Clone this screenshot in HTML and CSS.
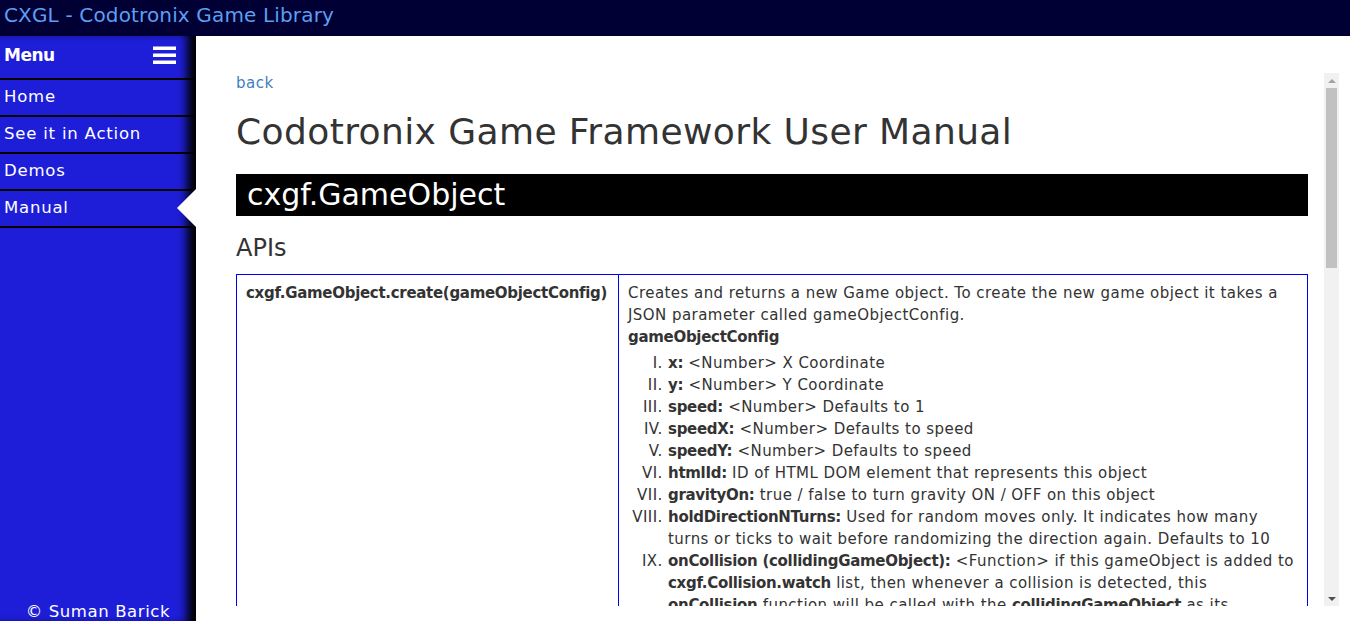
FILE: index.html
```html
<!DOCTYPE html>
<html>
<head>
<meta charset="utf-8">
<title>CXGL - Manual</title>
<link rel="stylesheet" href="styles.css">
</head>
<body>
<header class="topbar">CXGL - Codotronix Game Library</header>
<div class="layout">
  <nav class="sidebar">
    <div class="menu-head">
      <span class="menu-title">Menu</span>
      <svg class="burger" width="23" height="18" viewBox="0 0 23 18"><rect x="0" y="0.5" width="23" height="3.5" fill="#fff"/><rect x="0" y="7.5" width="23" height="3.5" fill="#fff"/><rect x="0" y="14.5" width="23" height="3.5" fill="#fff"/></svg>
    </div>
    <a class="nav-item">Home</a>
    <a class="nav-item">See it in Action</a>
    <a class="nav-item">Demos</a>
    <a class="nav-item active">Manual</a>
    <div class="spacer"></div>
    <div class="credit">© Suman Barick</div>
  </nav>
  <main class="main">
    <div class="panel">
      <div class="scroller">
        <a class="back">back</a>
        <h1 class="title">Codotronix Game Framework User Manual</h1>
        <h2 class="section">cxgf.GameObject</h2>
        <h3 class="sub">APIs</h3>
        <table class="api">
          <colgroup><col class="c1"><col></colgroup>
          <tr>
            <td class="fn">cxgf.GameObject.create(gameObjectConfig)</td>
            <td class="desc">
              Creates and returns a new Game object. To create the new game object it takes a JSON parameter called gameObjectConfig.
              <div class="cfg">gameObjectConfig</div>
              <ol class="roman">
                <li><b>x:</b> &lt;Number&gt; X Coordinate</li>
                <li><b>y:</b> &lt;Number&gt; Y Coordinate</li>
                <li><b>speed:</b> &lt;Number&gt; Defaults to 1</li>
                <li><b>speedX:</b> &lt;Number&gt; Defaults to speed</li>
                <li><b>speedY:</b> &lt;Number&gt; Defaults to speed</li>
                <li><b>htmlId:</b> ID of HTML DOM element that represents this object</li>
                <li><b>gravityOn:</b> true / false to turn gravity ON / OFF on this object</li>
                <li><b>holdDirectionNTurns:</b> Used for random moves only. It indicates how many turns or ticks to wait before randomizing the direction again. Defaults to 10</li>
                <li><b>onCollision (collidingGameObject):</b> &lt;Function&gt; if this gameObject is added to <b>cxgf.Collision.watch</b> list, then whenever a collision is detected, this <b>onCollision</b> function will be called with the <b>collidingGameObject</b> as its parameter.</li>
              </ol>
            </td>
          </tr>
          <tr>
            <td class="fn">gameObject.move()</td>
            <td class="desc">Moves the game object one step according to its speed and direction.</td>
          </tr>
        </table>
      </div>
      <div class="vscroll">
        <div class="sb-btn"><span class="arrow-up"></span></div>
        <div class="sb-thumb"></div>
        <div class="sb-track"></div>
        <div class="sb-btn"><span class="arrow-down"></span></div>
      </div>
    </div>
  </main>
</div>
</body>
</html>
```
FILE: styles.css
```css
html, body {
  margin: 0;
  padding: 0;
  height: 100%;
  overflow: hidden;
}
body {
  font-family: "DejaVu Sans", "Liberation Sans", sans-serif;
  display: flex;
  flex-direction: column;
  background: #fff;
}
.topbar {
  height: 36px;
  flex: none;
  background: #000035;
  color: #5d9ff0;
  font-size: 20px;
  letter-spacing: 0.15px;
  line-height: 30px;
  padding-left: 4px;
  box-sizing: border-box;
}
.layout {
  flex: 1;
  display: flex;
  min-height: 0;
}
.sidebar {
  width: 196px;
  flex: none;
  background: #1e1ed9;
  box-shadow: inset -13px 0 10px -4px #000;
  display: flex;
  flex-direction: column;
  color: #fff;
  position: relative;
}
.menu-head {
  height: 44px;
  border-bottom: 2px solid #000;
  display: flex;
  align-items: center;
  justify-content: space-between;
  padding: 0 20px 4px 4px;
  box-sizing: border-box;
}
.menu-title {
  font-weight: bold;
  font-size: 17px;
  letter-spacing: -0.5px;
}
.burger { display: block; }
.nav-item {
  height: 37px;
  border-bottom: 2px solid #000;
  box-sizing: border-box;
  padding-left: 4px;
  font-size: 16.5px;
  line-height: 34px;
  letter-spacing: 0.8px;
  position: relative;
  cursor: pointer;
}
.nav-item.active::after {
  content: "";
  position: absolute;
  right: 0;
  top: -2px;
  border-style: solid;
  border-width: 19px 19px 19px 0;
  border-color: transparent #fff transparent transparent;
}
.spacer { flex: 1; }
.credit {
  text-align: center;
  font-size: 16.5px;
  letter-spacing: 0.6px;
  line-height: 20px;
  height: 19px;
}
.main {
  flex: 1;
  padding: 37px 11px 15px 20px;
  min-width: 0;
  display: flex;
}
.panel {
  flex: 1;
  display: flex;
  min-width: 0;
}
.scroller {
  flex: 1;
  overflow: hidden;
  padding: 0 16px 0 20px;
  color: #333;
  min-width: 0;
}
.vscroll {
  width: 15px;
  flex: none;
  background: #f1f1f1;
  display: flex;
  flex-direction: column;
}
.sb-btn {
  height: 15px;
  display: flex;
  align-items: center;
  justify-content: center;
}
.arrow-up {
  width: 0; height: 0;
  border-left: 4px solid transparent;
  border-right: 4px solid transparent;
  border-bottom: 4px solid #a3a3a3;
}
.arrow-down {
  width: 0; height: 0;
  border-left: 4px solid transparent;
  border-right: 4px solid transparent;
  border-top: 4px solid #505050;
}
.sb-thumb {
  height: 180px;
  margin: 0 2px;
  background: #c1c1c1;
}
.sb-track { flex: 1; }
.back {
  display: block;
  color: #4080c0;
  font-size: 15px;
  letter-spacing: 0.5px;
  margin-top: 1px;
  line-height: 18px;
}
.title {
  font-size: 36px;
  letter-spacing: 0.4px;
  font-weight: normal;
  margin: 17px 0 0;
  line-height: 46px;
}
.section {
  background: #000;
  color: #fff;
  font-weight: normal;
  font-size: 30px;
  line-height: 42px;
  height: 42px;
  padding: 0 11px;
  margin: 19px 0 0;
}
.sub {
  font-weight: normal;
  font-size: 24px;
  margin: 18px 0 0;
  line-height: 28px;
}
.api {
  margin-top: 12px;
  width: 100%;
  border-collapse: collapse;
  table-layout: fixed;
  border: 1px solid #0000f0;
  font-size: 15px;
  letter-spacing: 0.45px;
  line-height: 22px;
}
.api col.c1 { width: 382px; }
.api td {
  border: 1px solid #0000f0;
  vertical-align: top;
  padding: 7px 9px;
}
.api b, .fn, .cfg { letter-spacing: -0.3px; }
.fn { font-weight: bold; }
.cfg { font-weight: bold; margin-bottom: 4px; }
.roman {
  list-style-type: upper-roman;
  margin: 0;
  padding-left: 40px;
}
```
